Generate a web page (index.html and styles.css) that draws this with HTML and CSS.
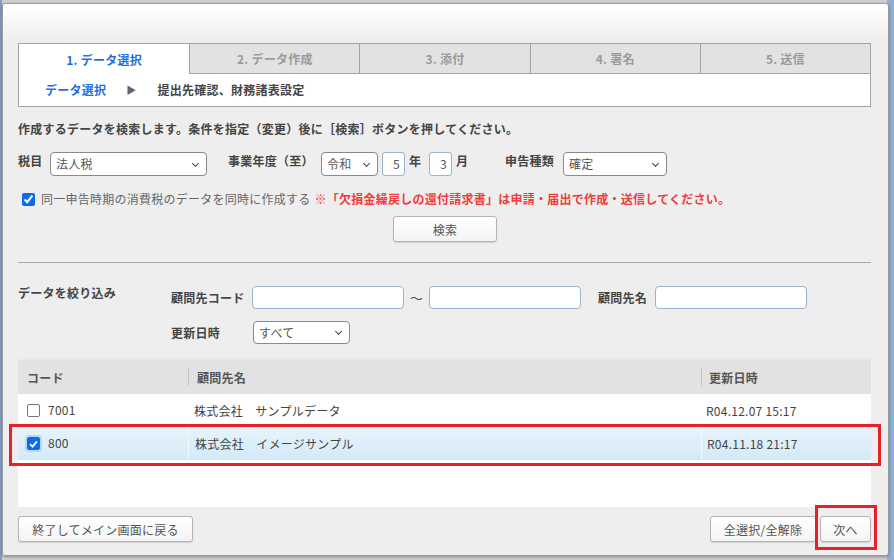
FILE: index.html
```html
<!DOCTYPE html>
<html lang="ja">
<head>
<meta charset="utf-8">
<link rel="stylesheet" href="styles.css">
</head>
<body>
<div class="desk">
  <div class="dialog">
    <div class="tabbox">
      <div class="tabs">
        <div class="tab active">1. データ選択</div>
        <div class="tab">2. データ作成</div>
        <div class="tab">3. 添付</div>
        <div class="tab">4. 署名</div>
        <div class="tab">5. 送信</div>
      </div>
      <div class="crumbs">
        <span class="crumb-cur">データ選択</span>
        <span class="crumb-arrow">▶</span>
        <span class="crumb-next">提出先確認、財務諸表設定</span>
      </div>
    </div>

    <p class="desc">作成するデータを検索します。条件を指定（変更）後に［検索］ボタンを押してください。</p>

    <div class="cond-row">
      <span class="lbl lbl-tax">税目</span>
      <div class="sel sel-tax">法人税</div>
      <span class="lbl lbl-year">事業年度（至）</span>
      <div class="sel sel-era">令和</div>
      <div class="num">5</div>
      <span class="lbl unit">年</span>
      <div class="num num-m">3</div>
      <span class="lbl unit unit-m">月</span>
      <span class="lbl lbl-kind">申告種類</span>
      <div class="sel sel-kind">確定</div>
    </div>

    <div class="chk-row">
      <input type="checkbox" class="chk" checked>
      <span class="chk-text">同一申告時期の消費税のデータを同時に作成する</span>
      <span class="warn">※「欠損金繰戻しの還付請求書」は申請・届出で作成・送信してください。</span>
    </div>

    <div class="search-wrap"><button class="btn btn-search">検索</button></div>

    <div class="rule"></div>

    <div class="filter">
      <div class="filter-title">データを絞り込み</div>
      <div class="filter-fields">
        <div class="frow">
          <span class="flbl">顧問先コード</span>
          <div class="txt"></div>
          <span class="tilde">～</span>
          <div class="txt"></div>
          <span class="flbl flbl-name">顧問先名</span>
          <div class="txt"></div>
        </div>
        <div class="frow frow2">
          <span class="flbl">更新日時</span>
          <div class="sel sel-date">すべて</div>
        </div>
      </div>
    </div>

    <div class="grid">
      <div class="ghead">
        <div class="c c1">コード</div>
        <div class="c c2">顧問先名</div>
        <div class="c c3">更新日時</div>
      </div>
      <div class="grow">
        <div class="c c1"><span class="box"></span>7001</div>
        <div class="c c2">株式会社　サンプルデータ</div>
        <div class="c c3">R04.12.07 15:17</div>
      </div>
      <div class="grow sel-row">
        <div class="c c1"><span class="box on"><svg width="12" height="12" viewBox="0 0 12 12"><path d="M2.3 6.2 L4.9 8.8 L9.8 3.2" fill="none" stroke="#fff" stroke-width="2"/></svg></span>800</div>
        <div class="c c2">株式会社　イメージサンプル</div>
        <div class="c c3">R04.11.18 21:17</div>
      </div>
    </div>

    <div class="footer">
      <button class="btn btn-back">終了してメイン画面に戻る</button>
      <div class="footer-right">
        <button class="btn btn-all">全選択/全解除</button>
        <button class="btn btn-next">次へ</button>
      </div>
    </div>

    <div class="mark mark-row"></div>
    <div class="mark mark-next"></div>
  </div>
</div>
</body>
</html>
```

FILE: styles.css
```css
* { box-sizing: border-box; }
html, body { margin: 0; padding: 0; }
body {
  width: 894px;
  height: 560px;
  overflow: hidden;
  background: #c9c9c9;
  font-family: "Noto Sans CJK JP", "Noto Sans", sans-serif;
  font-size: 12px;
  letter-spacing: 0.25px;
  color: #444;
}
.desk {
  height: 560px;
  padding: 3px 5px 4px 2px;
  background: linear-gradient(to right, #7f9fc6 0, #7f9fc6 2px, #cfcfcf 2px, #cfcfcf 887px, #8fb0d8 887px);
}
.dialog {
  position: relative;
  height: 553px;
  border: 1px solid #9c9c9c;
  border-radius: 3px;
  background: linear-gradient(to bottom, #ffffff 0, #eeeeee 38px, #eeeeee 100%);
  padding: 39px 17px 0 15px;
  box-shadow: 0 1px 3px rgba(0,0,0,0.35);
}

/* tabs */
.tabbox {
  width: 853px;
  border: 1px solid #a3a3a3;
  background: #fff;
}
.tabs {
  display: grid;
  grid-template-columns: repeat(5, 1fr);
  height: 30px;
}
.tab {
  display: flex;
  align-items: center;
  justify-content: center;
  background: #e2e2e2;
  border-left: 1px solid #a3a3a3;
  border-bottom: 1px solid #a3a3a3;
  color: #9a9a9a;
  font-weight: bold;
  font-size: 12px;
}
.tab.active {
  background: #fff;
  color: #1f6fe0;
  border-left: none;
  border-bottom: none;
}
.crumbs {
  height: 32px;
  display: flex;
  align-items: center;
  padding-left: 26px;
  padding-bottom: 2px;
  font-weight: bold;
}
.crumb-cur { color: #1f6fe0; }
.crumb-arrow { color: #666; font-size: 10px; margin-left: 20px; margin-right: 21px; }
.crumb-next { color: #444; }

.desc {
  margin: 0;
  padding-top: 13px;
  height: 34px;
  line-height: 18px;
  font-weight: bold;
  color: #444;
}

/* condition row */
.cond-row {
  display: flex;
  align-items: center;
  height: 24px;
  margin-top: 11px;
}
.lbl { font-weight: bold; color: #444; align-self: flex-start; line-height: 18px; white-space: nowrap; }
.lbl-tax { width: 32px; }
.sel {
  position: relative;
  height: 24px;
  border: 1px solid #8a8a8a;
  border-radius: 4px;
  background: #fff;
  padding-left: 5px;
  line-height: 22px;
  color: #555;
  font-size: 12px;
}
.sel::after {
  content: "";
  position: absolute;
  right: 8px;
  top: 8px;
  width: 4px;
  height: 4px;
  border-right: 1.5px solid #444;
  border-bottom: 1.5px solid #444;
  transform: rotate(45deg);
}
.sel-tax { width: 157px; }
.lbl-year { margin-left: 21px; width: 93px; }
.sel-era { width: 57px; }
.num {
  width: 23px;
  height: 24px;
  margin-left: 4px;
  border: 1px solid #9bb3cf;
  border-radius: 3px;
  background: #fff;
  text-align: right;
  padding-right: 4px;
  line-height: 22px;
  color: #555;
}
.num-m { margin-left: 0; }
.unit { margin-left: 4px; width: 20px; }
.unit-m { width: 49px; }
.lbl-kind { width: 58px; margin-left: 0; }
.sel-kind { width: 104px; }

/* checkbox row */
.chk-row {
  display: flex;
  align-items: center;
  height: 20px;
  margin-top: 12px;
  padding-left: 4px;
}
.chk {
  margin: 0;
  width: 13px;
  height: 13px;
  accent-color: #0b6cf2;
  margin-top: 3px;
}
.chk-text { margin-left: 6px; color: #666; }
.warn { margin-left: 4px; color: #f03c3c; font-weight: bold; }

.search-wrap {
  display: flex;
  justify-content: flex-start;
  padding-left: 375px;
  margin-top: 8px;
}
.btn {
  font-family: "Noto Sans CJK JP", "Noto Sans", sans-serif;
  font-size: 12px;
  letter-spacing: 0.25px;
  color: #555;
  background: linear-gradient(to bottom, #ffffff, #f3f3f3);
  border: 1px solid #b4b4b4;
  border-radius: 3px;
  padding: 0;
  height: 26px;
  box-shadow: 0 1px 1px rgba(0,0,0,0.12);
}
.btn-search { width: 104px; }

.rule {
  width: 853px;
  height: 0;
  border-top: 1px solid #a8a8a8;
  margin-top: 20px;
}

/* filter */
.filter {
  display: flex;
  margin-top: 23px;
  height: 72px;
}
.filter-title {
  width: 153px;
  font-weight: bold;
  color: #444;
  line-height: 14px;
}
.filter-fields { display: flex; flex-direction: column; }
.frow { display: flex; align-items: center; height: 23px; }
.frow2 { margin-top: 12px; }
.flbl { font-weight: bold; color: #444; width: 81px; white-space: nowrap; }
.flbl-name { width: 57px; margin-left: 17px; }
.txt {
  width: 152px;
  height: 23px;
  background: #fff;
  border: 1px solid #9bb3cf;
  border-radius: 4px;
}
.tilde { width: 25px; text-align: center; font-size: 13px; color: #444; }
.sel-date { width: 97px; height: 23px; line-height: 21px; margin-left: 1px; }
.sel-date::after { top: 7px; }

/* grid */
.grid {
  width: 853px;
  height: 149px;
  background: #fff;
}
.ghead {
  display: flex;
  height: 36px;
  background: #e2e2e2;
  border-top: 2px solid #e9e9e9;
  font-weight: bold;
  color: #555;
}
.ghead .c { position: relative; }
.ghead .c2::before, .ghead .c3::before {
  content: "";
  position: absolute;
  left: 0;
  top: 8px;
  height: 18px;
  border-left: 1px solid #c4c4c4;
}
.c { display: flex; align-items: center; }
.c1 { width: 170px; padding-left: 9px; }
.c2 { width: 513px; padding-left: 9px; }
.c3 { width: 170px; padding-left: 8px; }
.grow {
  display: flex;
  height: 33px;
  color: #444;
  font-size: 12px;
}
.grow .c1 { align-items: flex-start; padding-top: 7px; padding-left: 9px; }
.grow .c2 { padding-left: 6px; }
.grow .c3 { padding-left: 5px; }
.sel-row {
  background: linear-gradient(to bottom, #e8f4fc, #d3e9f7);
}
.sel-row .c2, .sel-row .c3 { border-left: 1px solid #f2f9fe; }
.box {
  display: inline-flex;
  align-items: center;
  justify-content: center;
  width: 13px;
  height: 13px;
  border: 1px solid #777;
  border-radius: 2px;
  background: #fff;
  margin-right: 8px;
  margin-top: 3px;
}
.box.on {
  background: #0b6cf2;
  border-color: #0b6cf2;
  box-shadow: 0 0 0 2px #b9d7f3;
}

/* footer */
.footer {
  display: flex;
  justify-content: space-between;
  width: 853px;
  margin-top: 9px;
}
.btn-back { width: 175px; }
.footer-right { display: flex; gap: 4px; }
.btn-all { width: 106px; }
.btn-next { width: 51px; }

/* annotation marks */
.mark {
  position: absolute;
  border: 3px solid #e8202a;
}
.mark-row { left: 6px; top: 420px; width: 872px; height: 42px; }
.mark-next { left: 812px; top: 501px; width: 62px; height: 45px; }
```
